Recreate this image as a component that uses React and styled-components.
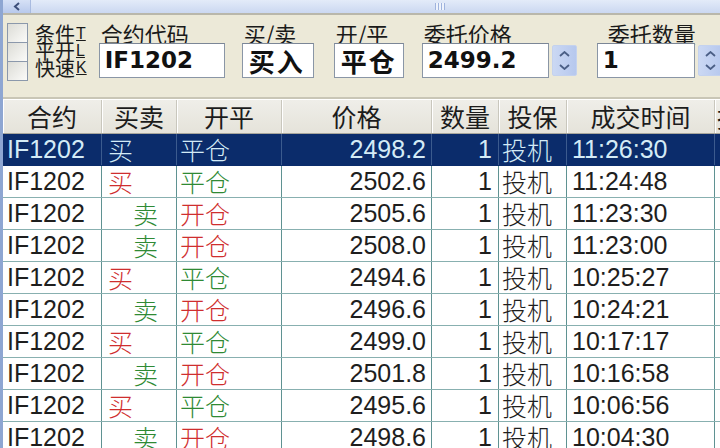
import React from "react";
import styled, { createGlobalStyle } from "styled-components";

const GlobalStyle = createGlobalStyle`
  html, body {
    margin: 0;
    padding: 0;
    background: #ffffff;
  }
`;

const CJK = `"Noto Sans CJK SC", "Noto Sans", sans-serif`;
const LATIN = `"Liberation Sans", "Noto Sans CJK SC", sans-serif`;
const BOLD_LATIN = `"DejaVu Sans", "Noto Sans CJK SC", sans-serif`;

const Window = styled.div`
  width: 720px;
  height: 448px;
  overflow: hidden;
  box-sizing: border-box;
  border-left: 3px solid #8ea6d2;
  background: #ece9d8;
  display: flex;
  flex-direction: column;
`;

/* horizontal scroll strip along the top */
const ScrollStrip = styled.div`
  height: 13px;
  display: flex;
  background: linear-gradient(#e3ebf9, #cbd8f1);
  border-bottom: 2px solid #b9b7ab;
  flex-shrink: 0;
`;

const ArrowButton = styled.div`
  width: 27px;
  display: flex;
  align-items: center;
  justify-content: center;
  background: linear-gradient(#d6e1f6, #b8c9ec);
  border-right: 1px solid #a9bbe0;
`;

const Track = styled.div`
  flex: 1;
  display: flex;
  align-items: center;
  padding-left: 404px;
`;

const Grip = styled.div`
  width: 10px;
  height: 7px;
  background: repeating-linear-gradient(
    90deg,
    #9fb3dd 0 1px,
    #eef3fc 1px 3px
  );
`;

/* order entry panel */
const Panel = styled.div`
  height: 84px;
  display: flex;
  align-items: flex-start;
  padding: 8px 0 0 4px;
  box-sizing: border-box;
  border-bottom: 2px solid #c9c6b6;
  flex-shrink: 0;
  white-space: nowrap;
`;

const Toggles = styled.div`
  display: flex;
  gap: 7px;
  flex-shrink: 0;
`;

const Boxes = styled.div`
  display: flex;
  flex-direction: column;
`;

const Check = styled.div`
  width: 19px;
  height: 18px;
  border: 1px solid #8b98ab;
  background: linear-gradient(135deg, #dcdcd6, #fbfbf9);
  & + & {
    margin-top: -1px;
  }
`;

const ToggleLabels = styled.div`
  display: flex;
  flex-direction: column;
  font-family: ${CJK};
  font-size: 20px;
  color: #1a1a1a;
  padding-top: 2px;
  span {
    display: flex;
    align-items: center;
    height: 17px;
    line-height: 1;
  }
  u {
    font-family: ${LATIN};
    font-size: 16px;
    margin-left: 1px;
  }
`;

const Field = styled.div`
  display: flex;
  flex-direction: column;
  flex-shrink: 0;
  margin-left: ${(p) => p.$gap}px;
`;

const FieldLabel = styled.div`
  font-family: ${CJK};
  font-size: 22px;
  line-height: 20px;
  color: #1a1a1a;
  padding-left: ${(p) => p.$indent || 2}px;
  height: 20px;
`;

const InputRow = styled.div`
  display: flex;
  align-items: center;
  gap: 3px;
`;

const Input = styled.div`
  width: ${(p) => p.$w}px;
  height: 35px;
  box-sizing: border-box;
  border: 1px solid #8a96a6;
  border-top-color: #7b8696;
  background: #ffffff;
  display: flex;
  align-items: center;
  padding-left: ${(p) => (p.$cjk ? 6 : 5)}px;
  font-family: ${(p) => (p.$cjk ? CJK : BOLD_LATIN)};
  font-weight: bold;
  font-size: ${(p) => (p.$cjk ? 26 : 23)}px;
  line-height: 1;
  letter-spacing: ${(p) => (p.$cjk ? 2 : 0)}px;
  color: #111;
`;

const Spinner = styled.div`
  width: 25px;
  height: 31px;
  box-sizing: border-box;
  border: 1px solid #c4d2ee;
  border-radius: 2px;
  background: linear-gradient(90deg, #cbd8f3, #b6c8ee);
  display: flex;
  flex-direction: column;
  align-items: center;
  justify-content: center;
  gap: 7px;
`;

/* trade list */
const Table = styled.div`
  flex: 1;
  background: #ffffff;
  display: flex;
  flex-direction: column;
`;

const cols = "99px 75px 105px 150px 67px 68px 148px 60px";

const HeadRow = styled.div`
  display: grid;
  grid-template-columns: ${cols};
  height: 35px;
  box-sizing: border-box;
  border-top: 1px solid #ffffff;
  border-bottom: 1px solid #a8a69c;
  background: linear-gradient(#efeee9, #e5e3da);
  flex-shrink: 0;
`;

const HeadCell = styled.div`
  display: flex;
  align-items: center;
  justify-content: ${(p) => (p.$clip ? "flex-start" : "center")};
  padding-left: ${(p) => (p.$clip ? 2 : 0)}px;
  font-family: ${CJK};
  font-size: 25px;
  line-height: 1;
  color: #1c1c1c;
  border-right: 1px solid #c9c7bd;
  box-shadow: inset 1px 0 0 #ffffff;
  white-space: nowrap;
  overflow: hidden;
`;

const Row = styled.div`
  display: grid;
  grid-template-columns: ${cols};
  height: 32px;
  box-sizing: border-box;
  border-bottom: 1px solid ${(p) => (p.$active ? "#0b2c6b" : "#88b0b0")};
  background: ${(p) => (p.$active ? "#0b2c6b" : "#ffffff")};
  flex-shrink: 0;
`;

const tones = {
  buy: "#cf2e2e",
  sell: "#2f8a34",
  text: "#1e1e1e",
};

const Cell = styled.div`
  display: flex;
  align-items: center;
  justify-content: ${(p) => (p.$right ? "flex-end" : "flex-start")};
  padding: 0 ${(p) => p.$pr || 0}px 0 ${(p) => p.$pl || 0}px;
  font-family: ${(p) => (p.$cjk ? CJK : LATIN)};
  font-weight: ${(p) => (p.$cjk ? 300 : 400)};
  font-size: 25px;
  line-height: 1;
  white-space: nowrap;
  overflow: hidden;
  color: ${(p) => (p.$active ? "#d4ebf6" : tones[p.$tone || "text"])};
  border-right: 1px solid ${(p) => (p.$active ? "#3c5b8e" : "#5f9292")};
`;

const trades = [
  ["buy", "close", "2498.2", "11:26:30"],
  ["buy", "close", "2502.6", "11:24:48"],
  ["sell", "open", "2505.6", "11:23:30"],
  ["sell", "open", "2508.0", "11:23:00"],
  ["buy", "close", "2494.6", "10:25:27"],
  ["sell", "open", "2496.6", "10:24:21"],
  ["buy", "close", "2499.0", "10:17:17"],
  ["sell", "open", "2501.8", "10:16:58"],
  ["buy", "close", "2495.6", "10:06:56"],
  ["sell", "open", "2498.6", "10:04:30"],
];

const headers = ["合约", "买卖", "开平", "价格", "数量", "投保", "成交时间"];

function Chevron({ up }) {
  return (
    <svg width="11" height="6" viewBox="0 0 11 6">
      <polyline
        points={up ? "1,5 5.5,1 10,5" : "1,1 5.5,5 10,1"}
        fill="none"
        stroke="#4b5f86"
        strokeWidth="1.8"
      />
    </svg>
  );
}

function Stepper() {
  return (
    <Spinner>
      <Chevron up />
      <Chevron />
    </Spinner>
  );
}

export default function App() {
  return (
    <>
      <GlobalStyle />
      <Window>
        <ScrollStrip>
          <ArrowButton>
            <svg width="8" height="9" viewBox="0 0 8 9">
              <polyline
                points="6,1 2,4.5 6,8"
                fill="none"
                stroke="#3d4f7a"
                strokeWidth="2"
              />
            </svg>
          </ArrowButton>
          <Track>
            <Grip />
          </Track>
        </ScrollStrip>

        <Panel>
          <Toggles>
            <Boxes>
              <Check />
              <Check />
              <Check />
            </Boxes>
            <ToggleLabels>
              <span>
                条件<u>T</u>
              </span>
              <span>
                平开<u>L</u>
              </span>
              <span>
                快速<u>K</u>
              </span>
            </ToggleLabels>
          </Toggles>

          <Field $gap={12}>
            <FieldLabel>合约代码</FieldLabel>
            <InputRow>
              <Input $w={126}>IF1202</Input>
            </InputRow>
          </Field>
          <Field $gap={17}>
            <FieldLabel>买/卖</FieldLabel>
            <InputRow>
              <Input $w={72} $cjk>
                买入
              </Input>
            </InputRow>
          </Field>
          <Field $gap={20}>
            <FieldLabel>开/平</FieldLabel>
            <InputRow>
              <Input $w={70} $cjk>
                平仓
              </Input>
            </InputRow>
          </Field>
          <Field $gap={18}>
            <FieldLabel>委托价格</FieldLabel>
            <InputRow>
              <Input $w={127}>2499.2</Input>
              <Stepper />
            </InputRow>
          </Field>
          <Field $gap={20}>
            <FieldLabel $indent={11}>委托数量</FieldLabel>
            <InputRow>
              <Input $w={98}>1</Input>
              <Stepper />
            </InputRow>
          </Field>
        </Panel>

        <Table>
          <HeadRow>
            {headers.map((h) => (
              <HeadCell key={h}>{h}</HeadCell>
            ))}
            <HeadCell $clip>报</HeadCell>
          </HeadRow>
          {trades.map(([side, action, price, time], i) => {
            const active = i === 0;
            return (
              <Row key={time} $active={active}>
                <Cell $active={active} $pl={4}>
                  IF1202
                </Cell>
                <Cell
                  $active={active}
                  $cjk
                  $tone={side}
                  $pl={side === "buy" ? 6 : 31}
                >
                  {side === "buy" ? "买" : "卖"}
                </Cell>
                <Cell
                  $active={active}
                  $cjk
                  $tone={action === "open" ? "buy" : "sell"}
                  $pl={3}
                >
                  {action === "open" ? "开仓" : "平仓"}
                </Cell>
                <Cell $active={active} $right $pr={5}>
                  {price}
                </Cell>
                <Cell $active={active} $right $pr={6}>
                  1
                </Cell>
                <Cell $active={active} $cjk $pl={3}>
                  投机
                </Cell>
                <Cell $active={active} $pl={5}>
                  {time}
                </Cell>
                <Cell $active={active} />
              </Row>
            );
          })}
        </Table>
      </Window>
    </>
  );
}
